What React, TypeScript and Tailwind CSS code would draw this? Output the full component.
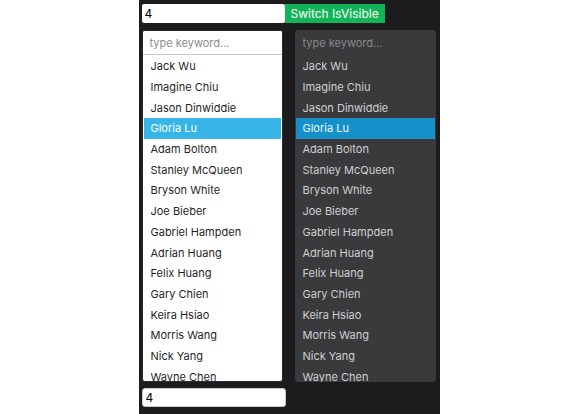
import React from "react";

const names = [
  "Jack Wu",
  "Imagine Chiu",
  "Jason Dinwiddie",
  "Gloria Lu",
  "Adam Bolton",
  "Stanley McQueen",
  "Bryson White",
  "Joe Bieber",
  "Gabriel Hampden",
  "Adrian Huang",
  "Felix Huang",
  "Gary Chien",
  "Keira Hsiao",
  "Morris Wang",
  "Nick Yang",
  "Wayne Chen",
];

const selected = "Gloria Lu";

const PickList = ({ dark }: { dark?: boolean }) => {
  return (
    <div
      className={
        dark
          ? "w-[141px] h-[352px] bg-[#3a3a3c] rounded-[3px] overflow-hidden flex flex-col"
          : "w-[141px] h-[352px] bg-white rounded-[3px] border border-[#2a2a2a] overflow-hidden flex flex-col"
      }
    >
      <input
        placeholder="type keyword..."
        className={
          dark
            ? "h-[25px] shrink-0 px-[8px] bg-transparent text-[11px] text-[#ddd] placeholder:text-[#88888c] outline-none"
            : "h-[24px] shrink-0 px-[7px] bg-white text-[11px] text-[#222] placeholder:text-[#8c8c8c] border-b border-[#c9c9c9] outline-none"
        }
      />
      <div className="pt-[1px] px-[1px]">
        {names.map((name) => {
          const isSel = name === selected;
          let cls = "h-[20.73px] flex items-center px-[7px] text-[11px] whitespace-nowrap ";
          if (isSel) cls += dark ? "bg-[#1590c8] text-[#eef6fb]" : "bg-[#36b5e6] text-white";
          else cls += dark ? "text-[#cfcfd1]" : "text-[#1f1f1f]";
          return (
            <div key={name} className={cls}>
              {name}
            </div>
          );
        })}
      </div>
    </div>
  );
};

export default function App() {
  return (
    <div className="w-[578px] h-[414px] bg-white flex justify-center" style={{ fontFamily: "Inter, 'Liberation Sans', sans-serif" }}>
      <div className="w-[301px] h-full bg-[#1c1c1e] pl-[3px] pt-[4px] flex flex-col">
        <div className="flex h-[19px]">
          <input
            defaultValue="4"
            className="w-[143px] h-[19px] bg-white rounded-[2px] px-[3px] text-[12px] text-black outline-none"
          />
          <button className="h-[19px] bg-[#13b457] text-white text-[12px] px-[6px] leading-none">
            Switch IsVisible
          </button>
        </div>
        <div className="flex gap-[12px] mt-[7px]">
          <PickList />
          <PickList dark />
        </div>
        <input
          defaultValue="4"
          className="mt-[6px] w-[144px] h-[19px] bg-white rounded-[3px] border border-[#c8c8c8] px-[3px] text-[12px] text-black outline-none"
        />
      </div>
    </div>
  );
}
